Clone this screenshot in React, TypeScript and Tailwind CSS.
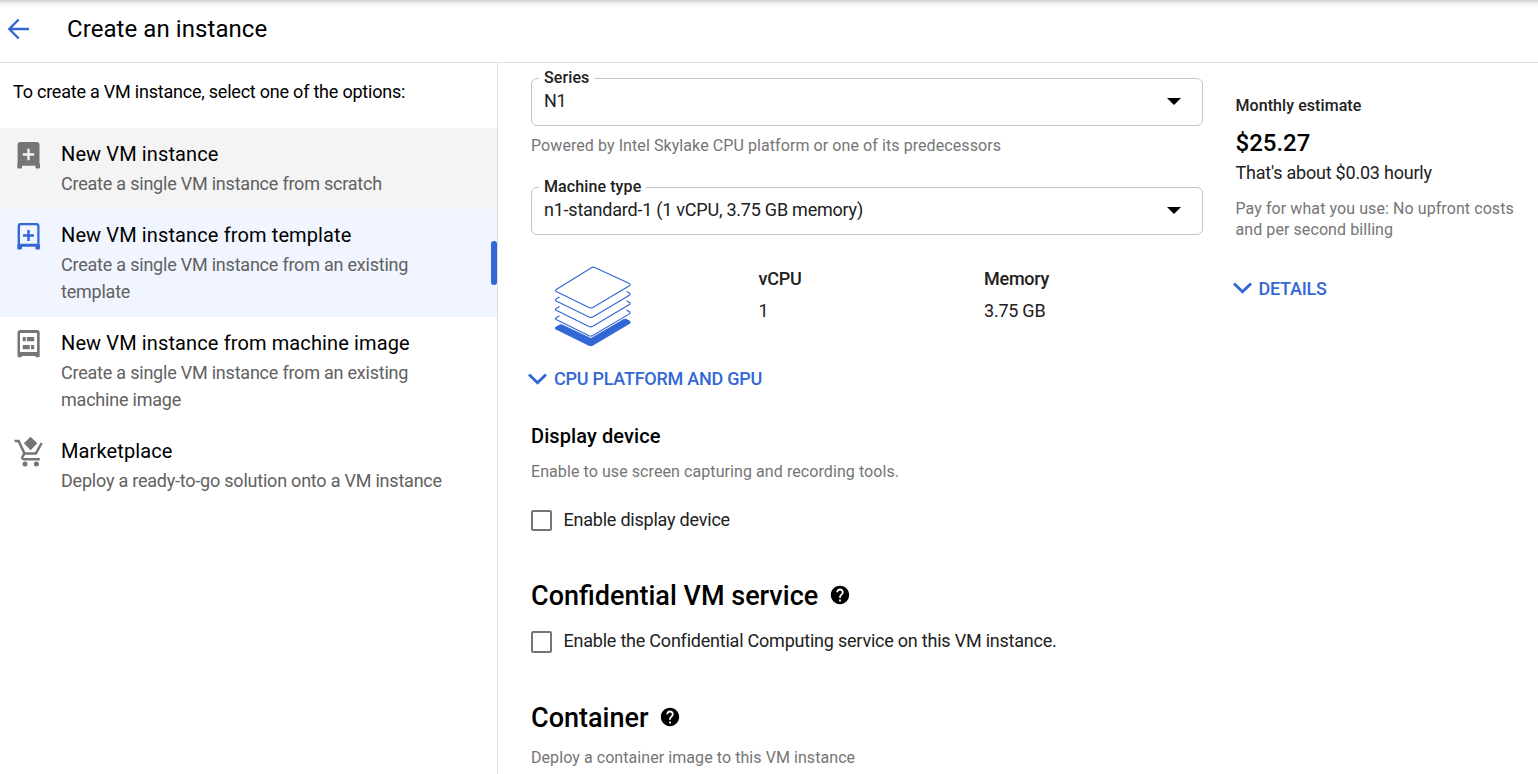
import type { ReactNode } from "react";

function BackArrow() {
  return (
    <svg className="block h-6 w-6" viewBox="0 0 24 24" fill="none" stroke="#3367d6" strokeWidth="2.4">
      <path d="M24 12H4.500M13.700 2.500L4.300 12l9.400 9.500" />
    </svg>
  );
}

function VmIcon() {
  return (
    <svg className="block h-[30px] w-[30px]" viewBox="0 0 30 30">
      <path fill="#757575" d="M7.500 2h16a3 3 0 0 1 3 3v18q.5 1 .5 2v2.500q0 1-1 1h-2.500q-1 0-1-1v-1.700H9v1.700q0 1-1 1H5.300q-1 0-1-1V25q0-1 .3-2V5a3 3 0 0 1 2.900-3z" />
      <path stroke="#f4f4f4" strokeWidth="2.300" d="M9.800 14.500h11.400M15.500 8.800v11.400" />
    </svg>
  );
}

function TemplateIcon() {
  return (
    <svg className="block h-[30px] w-[30px]" viewBox="0 0 30 30">
      <path fill="#3367d6" fillRule="evenodd" d="M7.500 2h16a3 3 0 0 1 3 3v18q.5 1 .5 2v2.500q0 1-1 1h-2.500q-1 0-1-1v-1.700H9v1.700q0 1-1 1H5.300q-1 0-1-1V25q0-1 .3-2V5a3 3 0 0 1 2.900-3zM8.300 4.300a1.300 1.300 0 0 0-1.300 1.300V22.800h17.300V5.600a1.300 1.300 0 0 0-1.300-1.300z" />
      <path stroke="#3367d6" strokeWidth="2.500" d="M10 14.500h11M15.500 9v11" />
    </svg>
  );
}

function MachineImageIcon() {
  return (
    <svg className="block h-[30px] w-[30px]" viewBox="0 0 30 30">
      <path fill="#757575" fillRule="evenodd" d="M7 1h17a2.700 2.700 0 0 1 2.700 2.700v23.300q0 1.300-1.200 1.300h-2q-1 0-1-1.300H9q0 1.300-1.200 1.300h-2q-1.300 0-1.300-1.300V3.700A2.700 2.700 0 0 1 7 1zM7 4v19h17V4z" />
      <path fill="#757575" d="M9.800 8h2.900v4.200H9.800zM13.800 8h7.400v4.200h-7.400zM9.800 16h7v4.200h-7zM18 16h3.200v4.200H18z" />
    </svg>
  );
}

function MarketplaceIcon() {
  return (
    <svg className="block h-[32px] w-[30px] overflow-visible" viewBox="0 0 30 32">
      <path fill="none" stroke="#757575" strokeWidth="2.500" d="M1.600 4h4l5.900 12.500h11.300L28.700 6M11.500 16.500l-2.100 3.400q-.8 2.200 1.800 2.400h15.600" />
      <circle cx="12" cy="27" r="2.500" fill="#757575" />
      <circle cx="23.400" cy="27" r="2.500" fill="#757575" />
      <path fill="#757575" d="M17.600-.3l6.700 6.600-6.700 6.900-6.700-6.900z" />
    </svg>
  );
}

function StackIcon() {
  const layer = "M5.500 21.600L2.200 23.600Q.6 24.600 2.200 25.500L35 41.600Q37 42.500 38.800 41.500L75.400 19.800Q76.800 18.600 75.400 17.600L72.500 16";
  return (
    <svg className="block h-[82px] w-[78px]" viewBox="0 0 78 82" fill="none" stroke="#3367d6" strokeWidth="1.150">
      <path d="M37.400 1.700Q39.300.7 41.200 1.700L75.400 17.600Q76.800 18.600 75.400 19.800L38.800 41.500Q37 42.500 35 41.600L2.200 25.500Q.6 24.600 2.200 23.600z" />
      <path transform="translate(0 9.400)" d={layer} />
      <path transform="translate(0 18.800)" d={layer} />
      <path transform="translate(0 28.100)" d={layer} />
      <path fill="#3367d6" d="M2.200 61.200L5.500 59.200q1.500-.8 3 0L37 72.800 70 53.600q1.300-.7 2.500 0L75.400 55.200Q76.800 56.200 75.400 57.400L38.800 79.100Q37 80.100 35 79.200L2.200 63.100Q.6 62.200 2.200 61.200z" />
    </svg>
  );
}

function Chevron() {
  return (
    <svg className="block h-3 w-5 shrink-0" viewBox="0 0 20 12" fill="none" stroke="#3367d6" strokeWidth="2.900">
      <path d="M1 1.500L9.500 9.800 18 1.500" />
    </svg>
  );
}

function Help() {
  return (
    <svg className="relative -top-px block h-[22px] w-[22px]" viewBox="0 0 24 24">
      <path d="M12 2C6.480 2 2 6.480 2 12s4.480 10 10 10 10-4.480 10-10S17.520 2 12 2zm1 17h-2v-2h2v2zm2.070-7.750l-.9.920C13.450 12.900 13 13.500 13 15h-2v-.5c0-1.100.450-2.100 1.170-2.830l1.240-1.260c.370-.360.590-.860.590-1.410 0-1.100-.9-2-2-2s-2 .9-2 2H8c0-2.210 1.790-4 4-4s4 1.790 4 4c0 .880-.360 1.680-.930 2.250z" />
    </svg>
  );
}

type OptionProps = { icon: ReactNode; title: string; lines: string[]; className: string; children?: ReactNode };

function Option({ icon, title, lines, className, children }: OptionProps) {
  return (
    <li className={`relative flex pl-[13px] ${className}`}>
      <div className="w-12 shrink-0 pt-3">{icon}</div>
      <div className="pt-[13px] whitespace-nowrap">
        <h2 className="text-[20px] leading-[27px] tracking-[0.12px] text-black">{title}</h2>
        <p className="mt-[2px] text-[18px] leading-[27px] tracking-[-0.22px] text-[#616161]">
          {lines.map((line) => (
            <span key={line} className="block">{line}</span>
          ))}
        </p>
      </div>
      {children}
    </li>
  );
}

function Select({ label, value }: { label: string; value: string }) {
  return (
    <div className="relative flex h-12 items-center justify-between rounded-[6px] border border-[#c6c6c6] pr-[21.5px] pb-[2px] pl-3">
      <span className="absolute -top-3 left-[7px] bg-white px-[5px] text-[16px] leading-[22px] font-medium tracking-[0.1px] text-[#212121]">{label}</span>
      <span className="text-[18px] leading-6 tracking-[-0.23px] text-[#212121]">{value}</span>
      <svg className="h-[7px] w-[14px]" viewBox="0 0 14 7"><path d="M0 0h14L7 7z" /></svg>
    </div>
  );
}

function Check({ label, boxClassName }: { label: string; boxClassName: string }) {
  return (
    <label className="flex h-[22px] items-start gap-[11.5px] text-[18px] text-[#212121]">
      <span className={`w-[21px] rounded-[2px] border-2 border-[#757575] ${boxClassName}`} />
      <span className="-mt-px leading-[22px] tracking-[-0.22px]">{label}</span>
    </label>
  );
}

export default function App() {
  return (
    <div className="flex h-[774px] w-[1538px] flex-col overflow-hidden bg-white font-[Roboto,sans-serif] text-black">
      <header className="flex h-[63px] shrink-0 items-start border-b border-[#e0e0e0] bg-[linear-gradient(#cfcfcf,#e5e5e5_2px,#fafafa_5px,#fff_8px)] pt-[13px] pl-[5px]">
        <div className="w-[62px] pt-1"><BackArrow /></div>
        <h1 className="text-[24px] leading-8 tracking-[0.07px]">Create an instance</h1>
      </header>
      <div className="flex min-h-0 flex-1">
        <aside className="w-[498px] shrink-0 border-r border-[#dcdcdc] pt-[17px]">
          <p className="mb-[24px] pl-[13px] text-[18px] leading-6 tracking-[-0.22px]">To create a VM instance, select one of the options:</p>
          <ul>
            <Option className="h-[81px] bg-[#f4f4f4]" icon={<VmIcon />} title="New VM instance" lines={["Create a single VM instance from scratch"]} />
            <Option className="h-[108px] bg-[#f0f5ff]" icon={<TemplateIcon />} title="New VM instance from template" lines={["Create a single VM instance from an existing", "template"]}>
              <span className="absolute top-8 right-0 h-[44px] w-[6px] rounded-[3px] bg-[#3367d6]" />
            </Option>
            <Option className="h-[108px]" icon={<MachineImageIcon />} title="New VM instance from machine image" lines={["Create a single VM instance from an existing", "machine image"]} />
            <Option className="h-[82px]" icon={<MarketplaceIcon />} title="Marketplace" lines={["Deploy a ready-to-go solution onto a VM instance"]} />
          </ul>
        </aside>
        <main className="ml-[33px] w-[672px] shrink-0 pt-[15px] whitespace-nowrap">
          <Select label="Series" value="N1" />
          <p className="mt-[9px] mb-[30px] text-[16px] leading-[22px] tracking-[0.08px] text-[#757575]">Powered by Intel Skylake CPU platform or one of its predecessors</p>
          <Select label="Machine type" value="n1-standard-1 (1 vCPU, 3.75 GB memory)" />
          <div className="mt-[31px] flex h-[81px] pl-[23px]">
            <div className="w-[204.5px]"><StackIcon /></div>
            <dl className="w-[225.5px] pt-px text-[18px] tracking-[-0.22px] text-[#212121]">
              <dt className="leading-[24px] font-medium">vCPU</dt>
              <dd className="mt-2 leading-6">1</dd>
            </dl>
            <dl className="pt-px text-[18px] tracking-[-0.24px] text-[#212121]">
              <dt className="leading-[24px] font-medium">Memory</dt>
              <dd className="mt-2 leading-6">3.75 GB</dd>
            </dl>
          </div>
          <button className="mt-[20px] -ml-[3px] flex h-6 items-center gap-[6px] text-[18px] leading-6 font-medium tracking-[-0.25px] text-[#3367d6]"><Chevron />CPU PLATFORM AND GPU</button>
          <h3 className="mt-[31px] text-[20px] leading-[28px] font-medium tracking-[0.1px]">Display device</h3>
          <p className="mt-[11px] mb-[27px] text-[16px] leading-[22px] tracking-[0.08px] text-[#757575]">Enable to use screen capturing and recording tools.</p>
          <Check label="Enable display device" boxClassName="h-[21px]" />
          <div className="mt-[46px] mb-[17px] flex h-9 items-center gap-[11px]">
            <h2 className="text-[27px] leading-9 font-medium">Confidential VM service</h2><Help />
          </div>
          <Check label="Enable the Confidential Computing service on this VM instance." boxClassName="h-[22px]" />
          <div className="mt-[47px] mb-[11px] flex h-9 items-center gap-[11px]">
            <h2 className="text-[27px] leading-9 font-medium">Container</h2><Help />
          </div>
          <p className="text-[16px] leading-[22px] tracking-[0.07px] text-[#757575]">Deploy a container image to this VM instance</p>
        </main>
        <section className="ml-[32.5px] pt-8 whitespace-nowrap">
          <h3 className="text-[16px] leading-[22px] font-medium tracking-[0.07px] text-[#212121]">Monthly estimate</h3>
          <p className="mt-[10px] text-[24px] leading-8 font-medium">$25.27</p>
          <p className="mt-[2px] text-[18px] leading-6 tracking-[-0.22px] text-[#212121]">That's about $0.03 hourly</p>
          <p className="mt-[13px] text-[16px] leading-[21px] tracking-[0.08px] text-[#757575]">
            <span className="block">Pay for what you use: No upfront costs</span>
            <span className="block">and per second billing</span>
          </p>
          <button className="mt-[36px] -ml-[3px] flex h-6 items-center gap-[6px] text-[18px] font-medium tracking-[-0.24px] text-[#3367d6]"><Chevron />DETAILS</button>
        </section>
      </div>
    </div>
  );
}
